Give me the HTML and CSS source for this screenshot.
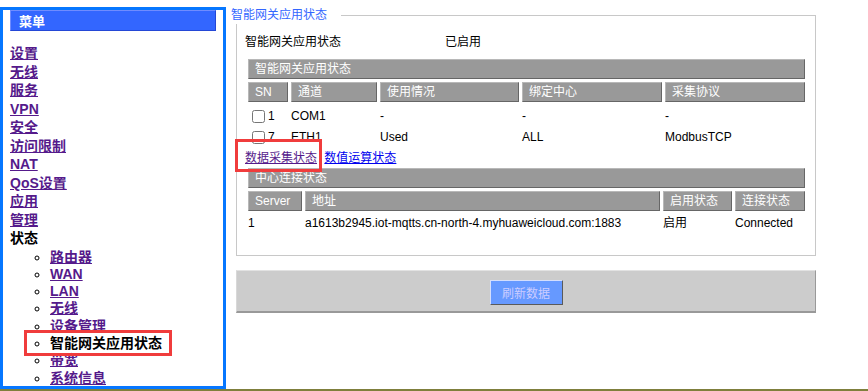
FILE: index.html
```html
<!DOCTYPE html>
<html>
<head>
    <meta charset="UTF-8">
    <meta name="viewport" content="width=device-width, initial-scale=1.0">
    <title>智能网关应用状态</title>
    <link rel="stylesheet" href="styles.css">
</head>
<body>
    <div class="page">
        <div class="main">
            <div class="menu-frame">
                <div class="menu-head">菜单</div>
                <ul class="menu-list">
                    <li><a href="#">设置</a></li>
                    <li><a href="#">无线</a></li>
                    <li><a href="#">服务</a></li>
                    <li><a href="#">VPN</a></li>
                    <li><a href="#">安全</a></li>
                    <li><a href="#">访问限制</a></li>
                    <li><a href="#">NAT</a></li>
                    <li><a href="#">QoS设置</a></li>
                    <li><a href="#">应用</a></li>
                    <li><a href="#">管理</a></li>
                    <li>状态
                        <ul class="sub-list">
                            <li><a href="#">路由器</a></li>
                            <li><a href="#">WAN</a></li>
                            <li><a href="#">LAN</a></li>
                            <li><a href="#">无线</a></li>
                            <li><a href="#">设备管理</a></li>
                            <li>智能网关应用状态</li>
                            <li><a href="#">带宽</a></li>
                            <li><a href="#">系统信息</a></li>
                        </ul>
                    </li>
                </ul>
            </div>

            <div class="content">
                <fieldset class="box">
                    <legend>智能网关应用状态</legend>
                    <div class="status-row">
                        <span class="status-label">智能网关应用状态</span>
                        <span>已启用</span>
                    </div>

                    <table class="grid grid-channels">
                        <colgroup>
                            <col style="width: 40px">
                            <col style="width: 86px">
                            <col style="width: 139px">
                            <col style="width: 140px">
                            <col style="width: 140px">
                        </colgroup>
                        <tr><th colspan="5" class="bar">智能网关应用状态</th></tr>
                        <tr>
                            <th>SN</th>
                            <th>通道</th>
                            <th>使用情况</th>
                            <th>绑定中心</th>
                            <th>采集协议</th>
                        </tr>
                        <tr class="check-row">
                            <td><input type="checkbox">1</td>
                            <td>COM1</td>
                            <td>-</td>
                            <td>-</td>
                            <td>-</td>
                        </tr>
                        <tr class="check-row">
                            <td><input type="checkbox">7</td>
                            <td>ETH1</td>
                            <td>Used</td>
                            <td>ALL</td>
                            <td>ModbusTCP</td>
                        </tr>
                    </table>

                    <div class="links">
                        <a href="#" class="visited">数据采集状态</a>
                        <a href="#" class="fresh">数值运算状态</a>
                    </div>

                    <table class="grid grid-center">
                        <colgroup>
                            <col style="width: 54px">
                            <col style="width: 355px">
                            <col style="width: 69px">
                            <col style="width: 70px">
                        </colgroup>
                        <tr><th colspan="4" class="bar">中心连接状态</th></tr>
                        <tr>
                            <th>Server</th>
                            <th>地址</th>
                            <th>启用状态</th>
                            <th>连接状态</th>
                        </tr>
                        <tr>
                            <td>1</td>
                            <td>a1613b2945.iot-mqtts.cn-north-4.myhuaweicloud.com:1883</td>
                            <td>启用</td>
                            <td>Connected</td>
                        </tr>
                    </table>
                </fieldset>

                <div class="actions">
                    <button class="refresh" disabled>刷新数据</button>
                </div>
            </div>
        </div>
        <div class="bottom-line"></div>

        <!-- annotation marks -->
        <div class="mark mark-menu"></div>
        <div class="mark mark-link"></div>
    </div>
</body>
</html>
```

FILE: styles.css
```css
body {
    margin: 0;
    font-family: "Liberation Sans", "Noto Sans CJK SC", sans-serif;
    font-size: 12px;
    color: #000;
    background: #fff;
}

.page {
    position: relative;
    width: 868px;
    height: 391px;
    overflow: hidden;
}

.main {
    display: flex;
    height: 389px;
}

.bottom-line {
    height: 2px;
    background: #7f7f3c;
}

/* left menu frame */
.menu-frame {
    box-sizing: border-box;
    width: 226px;
    height: 382px;
    margin-top: 7px;
    border: 3px solid #0677ff;
    overflow: hidden;
    flex-shrink: 0;
}

.menu-head {
    box-sizing: border-box;
    height: 21px;
    margin: 0 7px;
    padding-left: 8px;
    background: #3366ff;
    border: 1px solid;
    border-color: #6f8cff #2447d6 #2447d6 #6f8cff;
    color: #fff;
    font-family: "Noto Sans CJK SC", sans-serif;
    font-size: 13px;
    font-weight: bold;
    line-height: 19px;
}

.menu-list {
    list-style: none;
    margin: 0 0 0 7px;
    padding: 13px 0 0;
    font-size: 14px;
    font-weight: bold;
    line-height: 18.5px;
}

.menu-list a {
    color: #551a8b;
}

.sub-list {
    list-style: circle;
    margin: 1px 0 0;
    padding-left: 40px;
    line-height: 17.3px;
}

/* right content */
.content {
    width: 580px;
    padding: 6px 0 0 10px;
}

.box {
    box-sizing: border-box;
    width: 580px;
    min-width: 0;
    margin: 0;
    padding: 9px 7px 20px 8px;
    border: 1px solid #c8c8c8;
}

.box legend {
    margin-left: -15px;
    padding: 0 14px 0 1px;
    background: #fff;
    color: #3366ff;
    line-height: 18px;
}

.status-row {
    display: flex;
    line-height: 18px;
}

.status-label {
    width: 200px;
}

.grid {
    width: 100%;
    table-layout: fixed;
    border-collapse: separate;
    border-spacing: 3px;
}

.grid-channels {
    margin-top: 5px;
}

.grid th {
    box-sizing: border-box;
    height: 20px;
    padding: 0 6px;
    background: #999;
    border: 1px solid;
    border-color: #b8b8b8 #666 #666 #b8b8b8;
    color: #fff;
    font-weight: normal;
    text-align: left;
    line-height: 18px;
    white-space: nowrap;
}

.grid td {
    padding: 0;
    line-height: 18px;
    white-space: nowrap;
}

.check-row td {
    height: 18px;
    padding-top: 4px;
    line-height: 14px;
    box-sizing: border-box;
}

.check-row input {
    width: 13px;
    height: 13px;
    margin: 0 3px 0 4px;
    vertical-align: text-bottom;
}

.links {
    margin-top: 4px;
    line-height: 14px;
}

.links a.visited {
    color: #551a8b;
}

.links a.fresh {
    margin-left: 4px;
    color: #0000ee;
}

.actions {
    box-sizing: border-box;
    display: flex;
    align-items: flex-start;
    justify-content: center;
    width: 580px;
    height: 43px;
    margin-top: 14px;
    padding-top: 9px;
    background: #ccc;
    border-top: 1px solid #e2e2e2;
    border-left: 1px solid #d8d8d8;
    border-right: 1px solid #999;
    border-bottom: 2px solid #999;
}

.refresh {
    box-sizing: border-box;
    width: 73px;
    height: 25px;
    padding: 0;
    background: #6699ff;
    border: 1px solid;
    border-color: #d4defc #5a5a5a #5a5a5a #d4defc;
    color: #ccccff;
    font-family: "Noto Sans CJK SC", sans-serif;
    font-size: 12px;
}

/* red annotation boxes */
.mark {
    position: absolute;
    box-sizing: border-box;
    border: 3px solid #f03c3c;
}

.mark-menu {
    left: 24px;
    top: 330px;
    width: 148px;
    height: 26px;
}

.mark-link {
    left: 235px;
    top: 139px;
    width: 87px;
    height: 33px;
}
```
